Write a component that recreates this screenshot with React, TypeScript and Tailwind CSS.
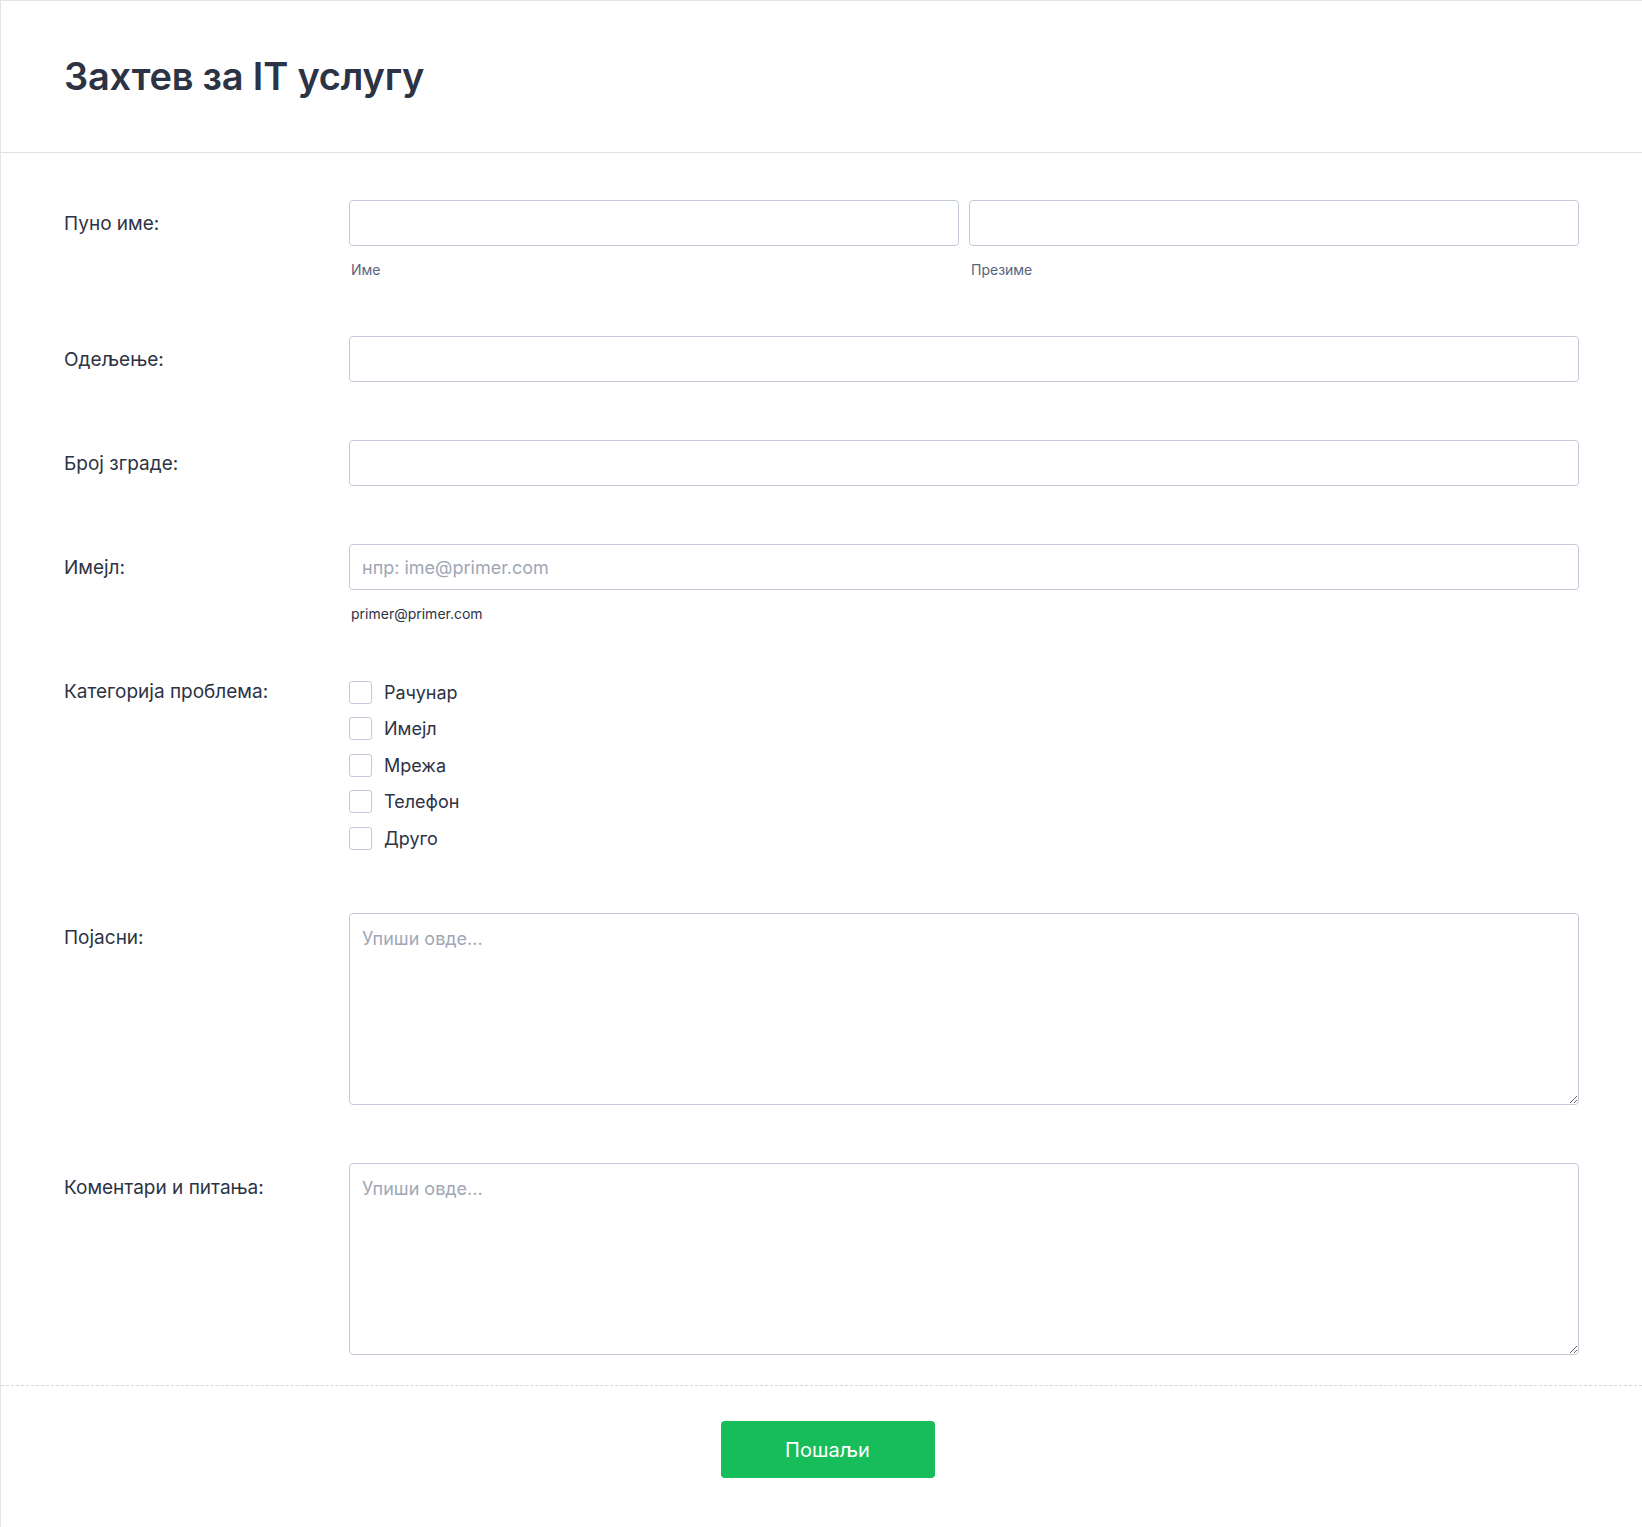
import React from "react";

const font = { fontFamily: "Inter, 'Noto Sans', sans-serif" };

function Label({ children }: { children: React.ReactNode }) {
  return (
    <div className="w-[285px] shrink-0 h-[46px] pt-[3px] flex items-center text-[19px] font-normal text-[#2c3345]">
      {children}
    </div>
  );
}

const inputCls =
  "w-full h-[46px] rounded-[4px] border border-[#c3cad8] bg-white px-3 text-[18px] text-[#2c3345] placeholder:text-[#a0a7b6] outline-none";

const areaCls =
  "block w-full h-[192px] rounded-[4px] border border-[#c3cad8] bg-white px-3 pt-[11px] text-[18px] text-[#2c3345] placeholder:text-[#a0a7b6] outline-none";

function Row({ children, className = "" }: { children: React.ReactNode; className?: string }) {
  return <div className={"flex px-[63px] py-[29px] " + className}>{children}</div>;
}

export default function App() {
  const cats = ["Рачунар", "Имејл", "Мрежа", "Телефон", "Друго"];
  return (
    <div className="w-full min-h-[1527px] bg-white border-l border-t border-[#e3e5ea] flex flex-col" style={font}>
      <div className="h-[152px] flex items-center px-[63px] border-b border-[#dfe1e8]">
        <h1 className="text-[38px] font-semibold text-[#2c3345] tracking-[-0.2px]">Захтев за IT услугу</h1>
      </div>
      <div className="pt-[18px]">
        <Row>
          <Label>Пуно име:</Label>
          <div className="flex-1 flex gap-[10px]">
            <div className="flex-1">
              <input className={inputCls} />
              <div className="mt-[15px] text-[14px] leading-[17px] text-[#57647e] pl-[2px]">Име</div>
            </div>
            <div className="flex-1">
              <input className={inputCls} />
              <div className="mt-[15px] text-[14px] leading-[17px] text-[#57647e] pl-[2px]">Презиме</div>
            </div>
          </div>
        </Row>
        <Row>
          <Label>Одељење:</Label>
          <div className="flex-1">
            <input className={inputCls} />
          </div>
        </Row>
        <Row>
          <Label>Број зграде:</Label>
          <div className="flex-1">
            <input className={inputCls} />
          </div>
        </Row>
        <Row>
          <Label>Имејл:</Label>
          <div className="flex-1">
            <input className={inputCls} placeholder="нпр: ime@primer.com" />
            <div className="mt-[15px] text-[14px] leading-[17px] text-[#2c3345] pl-[2px]">primer@primer.com</div>
          </div>
        </Row>
        <Row>
          <div className="w-[285px] shrink-0 h-[22px] pt-[2px] flex items-center text-[19px] font-normal text-[#2c3345]">
            Категорија проблема:
          </div>
          <div className="flex-1 flex flex-col gap-[12.6px] pb-[5px]">
            {cats.map((c) => (
              <label key={c} className="flex items-center gap-[12px] h-[24px]">
                <span className="w-[23px] h-[23px] rounded-[3px] border border-[#c3cad8] bg-white shrink-0" />
                <span className="text-[18px] text-[#2c3345]">{c}</span>
              </label>
            ))}
          </div>
        </Row>
        <Row>
          <Label>Појасни:</Label>
          <div className="flex-1">
            <textarea className={areaCls} placeholder="Упиши овде..." />
          </div>
        </Row>
        <Row>
          <Label>Коментари и питања:</Label>
          <div className="flex-1">
            <textarea className={areaCls} placeholder="Упиши овде..." />
          </div>
        </Row>
      </div>
      <div className="mt-[1px] border-t border-dashed border-[#d4d6db] flex justify-center pt-[35px] pb-[49px]">
        <button className="w-[214px] h-[57px] rounded-[4px] bg-[#18bd5b] text-white text-[20px] font-normal ml-[12px]">
          Пошаљи
        </button>
      </div>
    </div>
  );
}
